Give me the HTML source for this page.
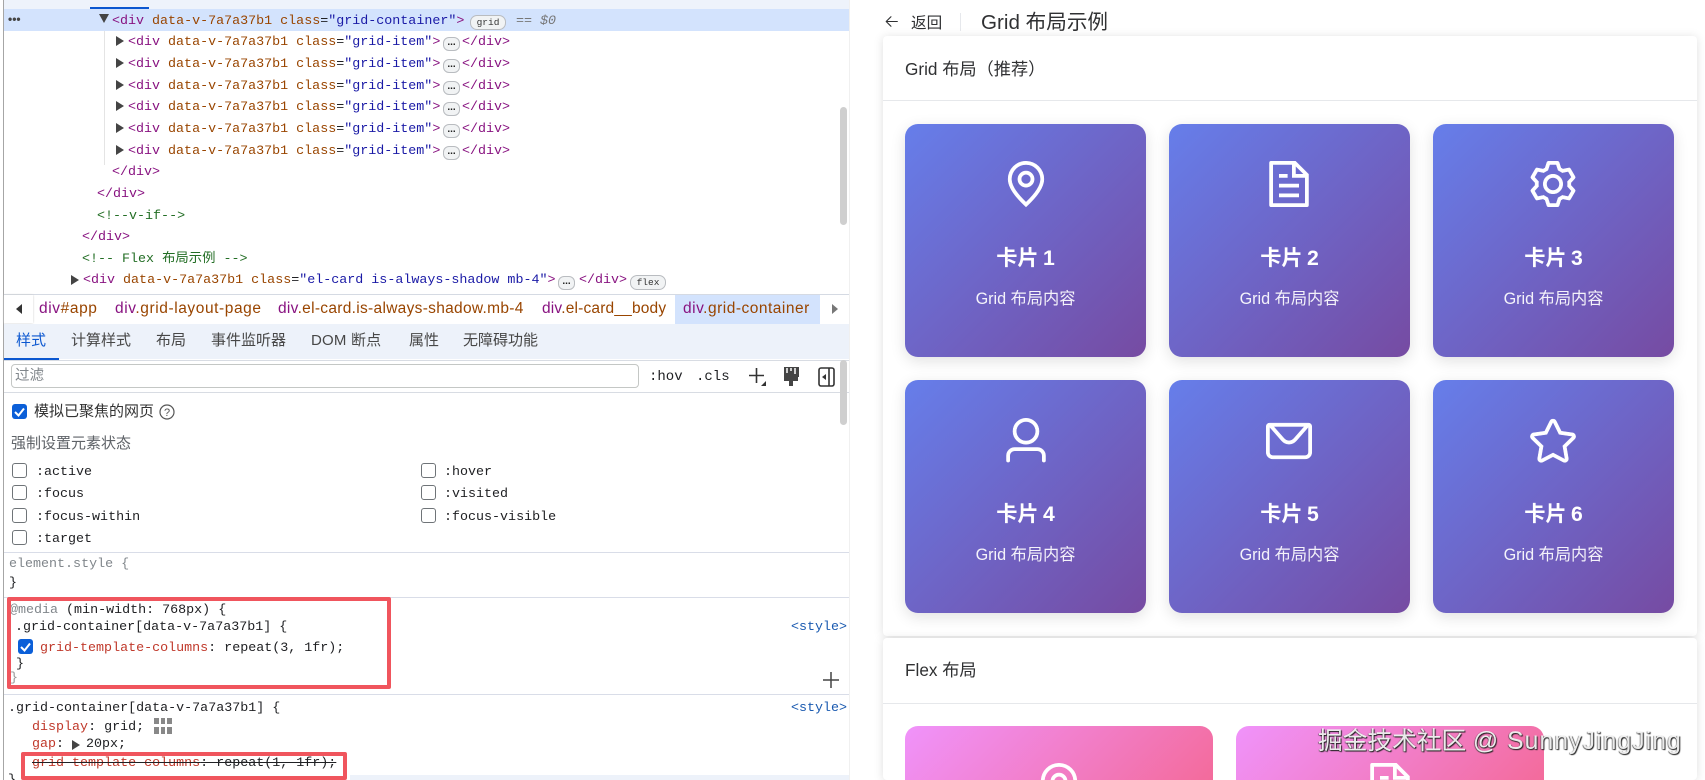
<!DOCTYPE html>
<html lang="zh-CN"><head><meta charset="utf-8"><title>Grid 布局示例</title>
<style>
html,body{margin:0;padding:0;width:1705px;height:780px;overflow:hidden;background:#fff}
body{position:relative;font-family:"Liberation Sans","Noto Sans CJK SC",sans-serif;color:#303133}
.a{position:absolute}
.t{position:absolute;white-space:pre;line-height:20px;height:20px}
.m{font-family:"Liberation Mono","Noto Sans CJK SC",monospace;font-size:13.35px;color:#202124}
.p{color:#881280}.n{color:#994500}.v{color:#1a1aa6}.c{color:#236e25}
.s{font-size:15.5px;color:#994500}
.tab{font-size:15px;color:#474747}
.cb{position:absolute;width:13px;height:13px;border:1.5px solid #6f7478;border-radius:3px;background:#fff}
.r{color:#c0392b}
.bx{position:absolute;width:15px;height:15px;background:#0b5fd8;border-radius:3px}
.bd{position:absolute;height:13px;border:1px solid #b9bcc0;border-radius:7px;background:#f1f3f4;font:9.5px/13px "Liberation Mono",monospace;color:#333;text-align:center;box-sizing:content-box}
.dots{position:absolute;width:15px;height:12px;border:1px solid #b9bcc0;border-radius:6px;background:#f1f3f4;font:bold 10px/9px "Liberation Sans",sans-serif;color:#222;text-align:center}
.card{position:absolute;background:#fff;box-shadow:0 1px 10px rgba(0,0,0,.13);border-radius:4px}
.g{position:absolute;width:241px;height:233px;border-radius:13px;background:linear-gradient(135deg,#667eea,#764ba2);box-shadow:0 4px 15px rgba(0,0,0,.12);color:#fff;text-align:center}
.g svg{position:absolute;left:94.5px;top:33.5px;width:52px;height:52px;fill:#fff;stroke:#fff;stroke-width:10}
.g .h{position:absolute;left:0;right:0;top:120px;line-height:30px;font-size:21.2px;font-weight:bold;word-spacing:-1.5px}
.g .b{position:absolute;left:0;right:0;top:163px;line-height:24px;font-size:16.2px;color:rgba(255,255,255,.92)}
.f{position:absolute;height:54px;top:726px;border-radius:13px 13px 0 0;background:linear-gradient(135deg,#f093fb,#f5576c) no-repeat;background-size:308px 233px;overflow:hidden}
.f svg{position:absolute;top:33.5px;width:52px;height:52px;fill:#fff;stroke:#fff;stroke-width:10}
</style></head><body>

<!-- top strip -->
<div class="a" style="left:3px;top:0;width:846px;height:9px;background:#eef3fb"></div>
<div class="a" style="left:90px;top:7px;width:59px;height:2px;background:#0b57d0"></div>
<div class="a" style="left:3px;top:0;width:1px;height:780px;background:#a6a6a6"></div>
<div class="a" style="left:849px;top:0;width:1px;height:780px;background:#f0f0f0"></div>

<!-- elements panel -->
<div class="a" style="left:4px;top:9px;width:845px;height:22px;background:#d3e3fd"></div>
<div class="t" style="left:8px;top:9px;font:bold 12px/20px 'Liberation Sans',sans-serif;color:#444">•••</div>
<div class="a" style="left:104px;top:31px;width:1px;height:134px;background:#e4e4e4"></div>

<svg class="a" style="left:99px;top:14px" width="10" height="9"><path d="M0 0h10L5 9z" fill="#444"/></svg>
<div class="t m" style="left:112px;top:12px"><span class="p">&lt;div</span> <span class="n">data-v-7a7a37b1 class</span>=<span class="v">"grid-container"</span><span class="p">&gt;</span></div>
<div class="bd" style="left:470px;top:15px;width:34px">grid</div>
<div class="t m" style="left:516px;top:12px;color:#777;font-style:italic">== $0</div>

<svg class="a" style="left:116px;top:36px" width="8" height="10"><path d="M0 0v10l8-5z" fill="#444"/></svg>
<div class="t m" style="left:128px;top:33px"><span class="p">&lt;div</span> <span class="n">data-v-7a7a37b1 class</span>=<span class="v">"grid-item"</span><span class="p">&gt;</span></div>
<div class="dots" style="left:443px;top:37px">...</div>
<div class="t m" style="left:462px;top:33px"><span class="p">&lt;/div&gt;</span></div>

<svg class="a" style="left:116px;top:58px" width="8" height="10"><path d="M0 0v10l8-5z" fill="#444"/></svg>
<div class="t m" style="left:128px;top:55px"><span class="p">&lt;div</span> <span class="n">data-v-7a7a37b1 class</span>=<span class="v">"grid-item"</span><span class="p">&gt;</span></div>
<div class="dots" style="left:443px;top:59px">...</div>
<div class="t m" style="left:462px;top:55px"><span class="p">&lt;/div&gt;</span></div>

<svg class="a" style="left:116px;top:80px" width="8" height="10"><path d="M0 0v10l8-5z" fill="#444"/></svg>
<div class="t m" style="left:128px;top:77px"><span class="p">&lt;div</span> <span class="n">data-v-7a7a37b1 class</span>=<span class="v">"grid-item"</span><span class="p">&gt;</span></div>
<div class="dots" style="left:443px;top:81px">...</div>
<div class="t m" style="left:462px;top:77px"><span class="p">&lt;/div&gt;</span></div>

<svg class="a" style="left:116px;top:101px" width="8" height="10"><path d="M0 0v10l8-5z" fill="#444"/></svg>
<div class="t m" style="left:128px;top:98px"><span class="p">&lt;div</span> <span class="n">data-v-7a7a37b1 class</span>=<span class="v">"grid-item"</span><span class="p">&gt;</span></div>
<div class="dots" style="left:443px;top:102px">...</div>
<div class="t m" style="left:462px;top:98px"><span class="p">&lt;/div&gt;</span></div>

<svg class="a" style="left:116px;top:123px" width="8" height="10"><path d="M0 0v10l8-5z" fill="#444"/></svg>
<div class="t m" style="left:128px;top:120px"><span class="p">&lt;div</span> <span class="n">data-v-7a7a37b1 class</span>=<span class="v">"grid-item"</span><span class="p">&gt;</span></div>
<div class="dots" style="left:443px;top:124px">...</div>
<div class="t m" style="left:462px;top:120px"><span class="p">&lt;/div&gt;</span></div>

<svg class="a" style="left:116px;top:145px" width="8" height="10"><path d="M0 0v10l8-5z" fill="#444"/></svg>
<div class="t m" style="left:128px;top:142px"><span class="p">&lt;div</span> <span class="n">data-v-7a7a37b1 class</span>=<span class="v">"grid-item"</span><span class="p">&gt;</span></div>
<div class="dots" style="left:443px;top:146px">...</div>
<div class="t m" style="left:462px;top:142px"><span class="p">&lt;/div&gt;</span></div>

<div class="t m p" style="left:112px;top:163px;color:#881280">&lt;/div&gt;</div>
<div class="t m p" style="left:97px;top:185px;color:#881280">&lt;/div&gt;</div>
<div class="t m c" style="left:97px;top:207px;color:#236e25">&lt;!--v-if--&gt;</div>
<div class="t m p" style="left:82px;top:228px;color:#881280">&lt;/div&gt;</div>
<div class="t m c" style="left:82px;top:250px;color:#236e25">&lt;!-- Flex 布局示例 --&gt;</div>

<svg class="a" style="left:71px;top:275px" width="8" height="10"><path d="M0 0v10l8-5z" fill="#444"/></svg>
<div class="t m" style="left:83px;top:271px"><span class="p">&lt;div</span> <span class="n">data-v-7a7a37b1 class</span>=<span class="v">"el-card is-always-shadow mb-4"</span><span class="p">&gt;</span></div>
<div class="dots" style="left:558px;top:276px">...</div>
<div class="t m" style="left:579px;top:271px"><span class="p">&lt;/div&gt;</span></div>
<div class="bd" style="left:630px;top:275px;width:34px">flex</div>

<div class="a" style="left:840px;top:107px;width:7px;height:118px;background:#cfcfcf;border-radius:4px"></div>

<!-- breadcrumbs -->
<div class="a" style="left:4px;top:294px;width:845px;height:1px;background:#d5dae3"></div>
<div class="a" style="left:4px;top:295px;width:29px;height:28px;box-shadow:0 0 2px #ccc;background:#fff"></div>
<svg class="a" style="left:16px;top:304px" width="6" height="10"><path d="M6 0v10L0 5z" fill="#333"/></svg>
<div class="a" style="left:675px;top:295px;width:145px;height:29px;background:#d3e3fd"></div>
<svg class="a" style="left:832px;top:304px" width="6" height="10"><path d="M0 0v10l6-5z" fill="#777"/></svg>
<div class="t s" style="left:39px;top:299px;letter-spacing:.6px"><span class="p">div</span>#app</div>
<div class="t s" style="left:115px;top:299px;letter-spacing:.58px"><span class="p">div</span>.grid-layout-page</div>
<div class="t s" style="left:278px;top:299px;letter-spacing:.3px"><span class="p">div</span>.el-card.is-always-shadow.mb-4</div>
<div class="t s" style="left:542px;top:299px;letter-spacing:.18px"><span class="p">div</span>.el-card__body</div>
<div class="t s" style="left:683px;top:299px;letter-spacing:.5px"><span class="p">div</span>.grid-container</div>

<!-- tabs -->
<div class="a" style="left:4px;top:324px;width:845px;height:35px;background:#edf2fa"></div>
<div class="a" style="left:4px;top:358px;width:55px;height:2px;background:#0b57d0"></div>
<div class="a" style="left:4px;top:360px;width:845px;height:1px;background:#d8dce3"></div>
<div class="t tab" style="left:16px;top:331px;color:#0b57d0">样式</div>
<div class="t tab" style="left:71px;top:331px">计算样式</div>
<div class="t tab" style="left:156px;top:331px">布局</div>
<div class="t tab" style="left:211px;top:331px">事件监听器</div>
<div class="t tab" style="left:311px;top:331px;letter-spacing:.2px">DOM 断点</div>
<div class="t tab" style="left:409px;top:331px">属性</div>
<div class="t tab" style="left:463px;top:331px">无障碍功能</div>

<!-- filter -->
<div class="a" style="left:11px;top:364px;width:626px;height:22px;border:1px solid #c4c7c5;border-radius:4px"></div>
<div class="t" style="left:15px;top:366px;font-size:14.5px;color:#80868b">过滤</div>
<div class="t m" style="left:649px;top:367px;font-size:14px">:hov</div>
<div class="t m" style="left:696px;top:367px;font-size:14px">.cls</div>
<svg class="a" style="left:749px;top:367px" width="18" height="20"><path d="M7.500 1v15M0 8.500h15" stroke="#333" stroke-width="1.600" fill="none"/><path d="M17 14v5h-5z" fill="#333"/></svg>
<svg class="a" style="left:783px;top:366px" width="17" height="21"><path d="M1 1h15v10H1zM3 1v6M7 1v4M1 11v4h5v5h4v-5h5v-4" fill="#444"/><path d="M4 2v5M8 2v3M12 2v6" stroke="#fff" stroke-width="1.500"/></svg>
<svg class="a" style="left:818px;top:367px" width="17" height="20"><rect x="1" y="1" width="15" height="18" rx="2" fill="none" stroke="#333" stroke-width="1.600"/><path d="M11 1v18" stroke="#333" stroke-width="1.600"/><path d="M8 7v6L4 10z" fill="#333"/></svg>
<div class="a" style="left:4px;top:392px;width:845px;height:1px;background:#d8dce3"></div>
<div class="a" style="left:840px;top:360px;width:7px;height:65px;background:#cfcfcf;border-radius:4px"></div>

<!-- emulate -->
<div class="bx" style="left:12px;top:404px"></div>
<svg class="a" style="left:12px;top:404px" width="15" height="15"><path d="M3 8l3.500 3.500L12 4.500" stroke="#fff" stroke-width="2" fill="none"/></svg>
<div class="t" style="left:34px;top:402px;font-size:15px;color:#333">模拟已聚焦的网页</div>
<svg class="a" style="left:159px;top:404px" width="16" height="16"><circle cx="8" cy="8" r="7" fill="none" stroke="#555" stroke-width="1.200"/><text x="8" y="12" font-size="11" text-anchor="middle" fill="#555" font-family="Liberation Sans">?</text></svg>
<div class="t" style="left:11px;top:434px;font-size:15px;color:#5f6368">强制设置元素状态</div>

<div class="cb" style="left:12px;top:463px"></div><div class="t m" style="left:36px;top:463px">:active</div>
<div class="cb" style="left:421px;top:463px"></div><div class="t m" style="left:444px;top:463px">:hover</div>
<div class="cb" style="left:12px;top:485px"></div><div class="t m" style="left:36px;top:485px">:focus</div>
<div class="cb" style="left:421px;top:485px"></div><div class="t m" style="left:444px;top:485px">:visited</div>
<div class="cb" style="left:12px;top:508px"></div><div class="t m" style="left:36px;top:508px">:focus-within</div>
<div class="cb" style="left:421px;top:508px"></div><div class="t m" style="left:444px;top:508px">:focus-visible</div>
<div class="cb" style="left:12px;top:530px"></div><div class="t m" style="left:36px;top:530px">:target</div>

<!-- rules -->
<div class="a" style="left:4px;top:552px;width:845px;height:1px;background:#d9dde8"></div>
<div class="t m" style="left:9px;top:555px;color:#80868b">element.style {</div>
<div class="t m" style="left:9px;top:574px">}</div>
<div class="a" style="left:4px;top:597px;width:845px;height:1px;background:#d9dde8"></div>
<div class="a" style="left:4px;top:694px;width:845px;height:1px;background:#d9dde8"></div>

<div class="t m" style="left:10px;top:601px"><span style="color:#80868b">@media</span> (min-width: 768px) {</div>
<div class="t m" style="left:15px;top:618px">.grid-container[data-v-7a7a37b1] {</div>
<div class="bx" style="left:18px;top:639px"></div>
<svg class="a" style="left:18px;top:639px" width="15" height="15"><path d="M3 8l3.500 3.500L12 4.500" stroke="#fff" stroke-width="2" fill="none"/></svg>
<div class="t m" style="left:40px;top:639px"><span class="r">grid-template-columns</span>: repeat(3, 1fr);</div>
<div class="t m" style="left:16px;top:655px">}</div>
<div class="t m" style="left:10px;top:669px;color:#999">}</div>
<div class="t m" style="left:791px;top:618px;color:#1a5ab0">&lt;style&gt;</div>
<svg class="a" style="left:823px;top:672px" width="16" height="16"><path d="M8 0v16M0 8h16" stroke="#444" stroke-width="1.500"/></svg>

<div class="t m" style="left:8px;top:699px">.grid-container[data-v-7a7a37b1] {</div>
<div class="t m" style="left:791px;top:699px;color:#1a5ab0">&lt;style&gt;</div>
<div class="t m" style="left:32px;top:718px"><span class="r">display</span>: grid;</div>
<svg class="a" style="left:154px;top:718px" width="18" height="16"><path d="M0 0h5v6H0zM7 0h4v6H7zM13 0h5v6h-5zM0 9h5v7H0zM7 9h4v7H7zM13 9h5v7h-5z" fill="#888"/></svg>
<div class="t m" style="left:32px;top:735px"><span class="r">gap</span>:</div>
<svg class="a" style="left:72px;top:740px" width="8" height="10"><path d="M0 0v10l8-5z" fill="#444"/></svg>
<div class="t m" style="left:86px;top:735px">20px;</div>
<div class="t m" style="left:32px;top:754px;text-decoration:line-through"><span class="r">grid-template-columns</span>: repeat(1, 1fr);</div>
<div class="t m" style="left:8px;top:771px;height:9px;overflow:hidden">}</div>
<div class="a" style="left:350px;top:775px;width:499px;height:5px;background:#edf2fa"></div>

<!-- red boxes -->
<div class="a" style="left:7px;top:597px;width:376px;height:84px;border:4px solid #f0555d;border-radius:2px"></div>
<div class="a" style="left:21px;top:752px;width:318px;height:20px;border:4px solid #f0555d;border-radius:2px"></div>

<!-- right page header -->
<svg class="a" style="left:883px;top:13px;fill:#303133" width="17" height="17" viewBox="0 0 1024 1024"><path d="M224 480h640a32 32 0 1 1 0 64H224a32 32 0 0 1 0-64z"/><path d="m237.248 512 265.408 265.344a32 32 0 0 1-45.312 45.312l-288-288a32 32 0 0 1 0-45.312l288-288a32 32 0 1 1 45.312 45.312L237.248 512z"/></svg>
<div class="t" style="left:911px;top:14px;font-size:15.6px;color:#303133">返回</div>
<div class="a" style="left:960px;top:13px;width:1px;height:18px;background:#e6e8ec"></div>
<div class="t" style="left:981px;top:13px;font-size:20.6px;color:#303133">Grid 布局示例</div>

<!-- card 1 -->
<div class="card" style="left:883px;top:36px;width:814px;height:600px"></div>
<div class="a" style="left:883px;top:100px;width:814px;height:1px;background:#e6e8eb"></div>
<div class="t" style="left:905px;top:59px;font-size:17.2px;color:#303133">Grid 布局（推荐）</div>

<div class="g" style="left:905px;top:124px"><svg viewBox="0 0 1024 1024"><path d="M800 416a288 288 0 1 0-576 0c0 118.144 94.528 272.128 288 456.576C705.472 688.128 800 534.144 800 416zM512 960C277.312 746.688 160 565.312 160 416a352 352 0 0 1 704 0c0 149.312-117.312 330.688-352 544z"/><path d="M512 512a96 96 0 1 0 0-192 96 96 0 0 0 0 192zm0 64a160 160 0 1 1 0-320 160 160 0 0 1 0 320z"/></svg><div class="h">卡片 1</div><div class="b">Grid 布局内容</div></div>

<div class="g" style="left:1169px;top:124px"><svg style="left:93.5px" viewBox="0 0 1024 1024"><path d="M832 384H576V128H192v768h640V384zm-26.496-64L640 154.496V320h165.504zM160 64h480l256 256v608a32 32 0 0 1-32 32H160a32 32 0 0 1-32-32V96a32 32 0 0 1 32-32zm160 448h384v64H320v-64zm0-192h160v64H320v-64zm0 384h384v64H320v-64z"/></svg><div class="h">卡片 2</div><div class="b">Grid 布局内容</div></div>

<div class="g" style="left:1433px;top:124px"><svg style="left:93.5px" viewBox="0 0 1024 1024"><path d="M600.704 64a32 32 0 0 1 30.464 22.208l35.2 109.376c14.784 7.232 28.928 15.36 42.432 24.512l112.384-24.192a32 32 0 0 1 34.432 15.36L944.32 364.8a32 32 0 0 1-4.032 37.504l-77.12 85.12a357.12 357.12 0 0 1 0 49.024l77.12 85.248a32 32 0 0 1 4.032 37.504l-88.704 153.6a32 32 0 0 1-34.432 15.296L708.8 803.904c-13.44 9.088-27.648 17.28-42.368 24.512l-35.264 109.376A32 32 0 0 1 600.704 960H423.296a32 32 0 0 1-30.464-22.208L357.696 828.48a351.616 351.616 0 0 1-42.56-24.64l-112.32 24.256a32 32 0 0 1-34.432-15.36L79.68 659.2a32 32 0 0 1 4.032-37.504l77.12-85.248a357.12 357.12 0 0 1 0-48.896l-77.12-85.248A32 32 0 0 1 79.68 364.8l88.704-153.6a32 32 0 0 1 34.432-15.296l112.32 24.256c13.568-9.152 27.776-17.408 42.56-24.64l35.2-109.312A32 32 0 0 1 423.232 64H600.64zm-23.424 64H446.72l-36.352 113.088-24.512 11.968a294.113 294.113 0 0 0-34.816 20.096l-22.656 15.36-116.224-25.088-65.28 113.152 79.68 88.192-1.92 27.136a293.12 293.12 0 0 0 0 40.192l1.92 27.136-79.808 88.192 65.344 113.152 116.224-25.024 22.656 15.296a294.113 294.113 0 0 0 34.816 20.096l24.512 11.968L446.72 896h130.688l36.48-113.152 24.448-11.904a288.282 288.282 0 0 0 34.752-20.096l22.592-15.296 116.288 25.024 65.28-113.152-79.744-88.192 1.92-27.136a293.12 293.12 0 0 0 0-40.256l-1.92-27.136 79.808-88.128-65.344-113.152-116.288 24.96-22.592-15.232a287.616 287.616 0 0 0-34.752-20.096l-24.448-11.904L577.344 128zM512 320a192 192 0 1 1 0 384 192 192 0 0 1 0-384zm0 64a128 128 0 1 0 0 256 128 128 0 0 0 0-256z"/></svg><div class="h">卡片 3</div><div class="b">Grid 布局内容</div></div>

<div class="g" style="left:905px;top:380px"><svg style="top:35px" viewBox="0 0 1024 1024"><path d="M512 512a192 192 0 1 0 0-384 192 192 0 0 0 0 384zm0 64a256 256 0 1 1 0-512 256 256 0 0 1 0 512zm320 320v-96a96 96 0 0 0-96-96H288a96 96 0 0 0-96 96v96a32 32 0 1 1-64 0v-96a160 160 0 0 1 160-160h448a160 160 0 0 1 160 160v96a32 32 0 1 1-64 0z"/></svg><div class="h">卡片 4</div><div class="b">Grid 布局内容</div></div>

<div class="g" style="left:1169px;top:380px"><svg style="left:93.5px;top:35px" viewBox="0 0 1024 1024"><path d="M128 224v512a64 64 0 0 0 64 64h640a64 64 0 0 0 64-64V224H128zm0-64h768a64 64 0 0 1 64 64v512a128 128 0 0 1-128 128H192A128 128 0 0 1 64 736V224a64 64 0 0 1 64-64z"/><path d="M904 224 656.512 506.88a192 192 0 0 1-289.024 0L120 224h784zm-698.944 0 210.56 240.704a128 128 0 0 0 192.704 0L818.944 224H205.056z"/></svg><div class="h">卡片 5</div><div class="b">Grid 布局内容</div></div>

<div class="g" style="left:1433px;top:380px"><svg style="left:93.5px;top:34.5px" viewBox="0 0 1024 1024"><path d="m512 747.84 228.16 119.936a6.4 6.4 0 0 0 9.28-6.72l-43.52-254.08 184.512-179.904a6.4 6.4 0 0 0-3.52-10.88l-255.104-37.12L517.76 147.904a6.4 6.4 0 0 0-11.52 0L392.192 379.072l-255.104 37.12a6.4 6.4 0 0 0-3.52 10.944l184.512 179.84-43.52 254.08a6.4 6.4 0 0 0 9.216 6.72L512 747.84zM313.6 924.48a70.4 70.4 0 0 1-102.144-74.24l37.888-220.928L88.96 472.96A70.4 70.4 0 0 1 128 352.896l221.76-32.256 99.2-200.96a70.4 70.4 0 0 1 126.208 0l99.2 200.96 221.824 32.256a70.4 70.4 0 0 1 39.04 120.064L774.72 629.376l37.888 220.928a70.4 70.4 0 0 1-102.144 74.24L512 820.096l-198.4 104.32z"/></svg><div class="h">卡片 6</div><div class="b">Grid 布局内容</div></div>

<!-- card 2 -->
<div class="card" style="left:883px;top:638px;width:814px;height:142px"></div>
<div class="a" style="left:883px;top:703px;width:814px;height:1px;background:#e6e8eb"></div>
<div class="t" style="left:905px;top:660px;font-size:17.2px;color:#303133">Flex 布局</div>

<div class="f" style="left:905px;width:308px"><svg style="left:128px" viewBox="0 0 1024 1024"><path d="M800 416a288 288 0 1 0-576 0c0 118.144 94.528 272.128 288 456.576C705.472 688.128 800 534.144 800 416zM512 960C277.312 746.688 160 565.312 160 416a352 352 0 0 1 704 0c0 149.312-117.312 330.688-352 544z"/><path d="M512 512a96 96 0 1 0 0-192 96 96 0 0 0 0 192zm0 64a160 160 0 1 1 0-320 160 160 0 0 1 0 320z"/></svg></div>
<div class="f" style="left:1236px;width:308px"><svg style="left:128px" viewBox="0 0 1024 1024"><path d="M832 384H576V128H192v768h640V384zm-26.496-64L640 154.496V320h165.504zM160 64h480l256 256v608a32 32 0 0 1-32 32H160a32 32 0 0 1-32-32V96a32 32 0 0 1 32-32zm160 448h384v64H320v-64zm0-192h160v64H320v-64zm0 384h384v64H320v-64z"/></svg></div>

<!-- watermark -->
<div class="a" style="left:1318px;top:724px;white-space:pre;font-size:24.7px;line-height:36px;color:rgba(255,255,255,.9);text-shadow:1px 1px 1px #222,-0.5px 0.5px 1px #444">掘金技术社区 <span style="letter-spacing:1.1px">@ SunnyJingJing</span></div>
</body></html>
